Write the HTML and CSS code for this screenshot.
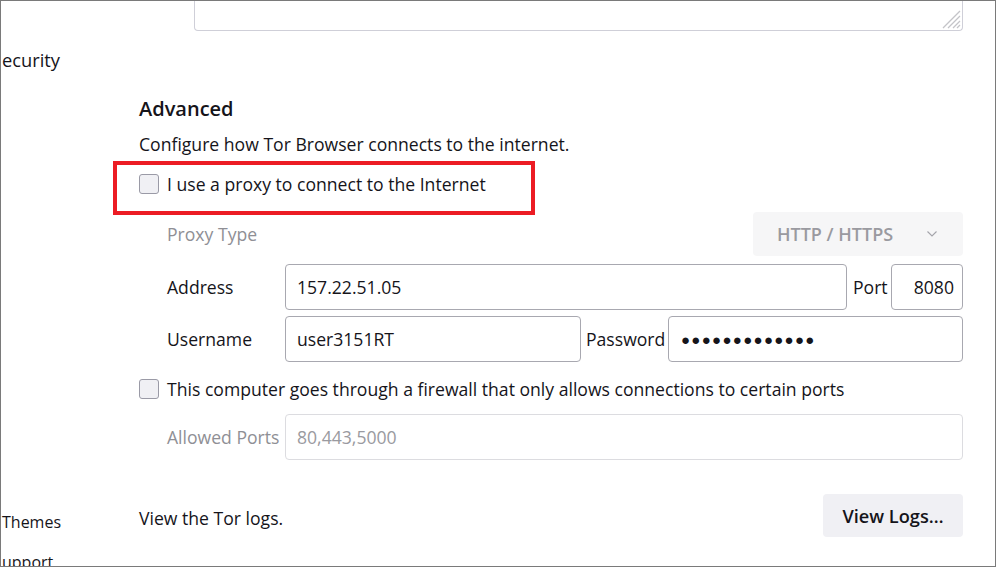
FILE: index.html
```html
<!DOCTYPE html>
<html lang="en">
<head>
<meta charset="utf-8">
<title>Tor Browser – Connection settings</title>
<link rel="stylesheet" href="styles.css">
</head>
<body>
<div class="window">
  <aside class="sidebar">
    <div class="nav-item nav-security">ecurity</div>
    <div class="nav-item nav-themes">Themes</div>
    <div class="nav-item nav-support">upport</div>
  </aside>
  <main class="content">
    <div class="textarea-tail">
      <svg class="grip" width="19" height="19" viewBox="0 0 19 19" aria-hidden="true">
        <path d="M18 1 L1 18 M18 6 L6 18 M18 11 L11 18 M18 15 L15 18" stroke="#c4c4c8" stroke-width="1.3" fill="none"/>
      </svg>
    </div>
    <section class="advanced">
      <h2 class="heading">Advanced</h2>
      <p class="desc">Configure how Tor Browser connects to the internet.</p>
      <div class="check-row proxy-check">
        <span class="checkbox"></span>
        <span class="check-label">I use a proxy to connect to the Internet</span>
      </div>
      <div class="form">
        <div class="row row-type">
          <span class="label disabled">Proxy Type</span>
          <div class="select">
            <span>HTTP / HTTPS</span>
            <svg class="chevron" width="12" height="8" viewBox="0 0 12 8" aria-hidden="true">
              <path d="M1.5 1.5 L6 6 L10.5 1.5" stroke="#a4a4aa" stroke-width="1.1" fill="none"/>
            </svg>
          </div>
        </div>
        <div class="row row-address">
          <span class="label">Address</span>
          <div class="field field-address">157.22.51.05</div>
          <span class="inline-label port-label">Port</span>
          <div class="field field-port">8080</div>
        </div>
        <div class="row row-user">
          <span class="label">Username</span>
          <div class="field field-user">user3151RT</div>
          <span class="inline-label pass-label">Password</span>
          <div class="field field-pass"><span class="dots">●●●●●●●●●●●●●</span></div>
        </div>
      </div>
      <div class="check-row firewall-check">
        <span class="checkbox"></span>
        <span class="check-label">This computer goes through a firewall that only allows connections to certain ports</span>
      </div>
      <div class="form">
        <div class="row row-ports">
          <span class="label disabled">Allowed Ports</span>
          <div class="field field-ports disabled-field">80,443,5000</div>
        </div>
      </div>
      <div class="logs-row">
        <span class="logs-text">View the Tor logs.</span>
        <button class="btn" type="button">View Logs…</button>
      </div>
    </section>
  </main>
  <div class="highlight"></div>
</div>
</body>
</html>
```
FILE: styles.css
```css
* { box-sizing: border-box; }

body {
  margin: 0;
  background: #ffffff;
  font-family: "Open Sans", "Noto Sans", sans-serif;
  color: #15141a;
}

.window {
  position: relative;
  width: 996px;
  height: 567px;
  border: 1px solid #7a7a7a;
  overflow: hidden;
  display: grid;
  grid-template-columns: 138px 824px;
  align-items: start;
}

/* sidebar */
.sidebar {
  display: flex;
  flex-direction: column;
  padding-left: 1px;
  padding-top: 46px;
}
.nav-item { white-space: nowrap; color: #15141a; }
.nav-security { font-size: 18.3px; line-height: 26px; }
.nav-themes { font-size: 16px; line-height: 22px; margin-top: 438px; }
.nav-support { font-size: 16px; line-height: 22px; margin-top: 18px; }

/* content */
.content {
  display: flex;
  flex-direction: column;
}

.textarea-tail {
  margin-left: 55px;
  height: 30px;
  border: 1px solid #cfcfd8;
  border-top: none;
  border-radius: 0 0 4px 4px;
  display: flex;
  justify-content: flex-end;
  align-items: flex-end;
  padding: 0 1px 1px 0;
}
.grip { display: block; }

.advanced {
  display: flex;
  flex-direction: column;
}

.heading {
  margin: 65px 0 0;
  font-size: 20px;
  font-weight: 600;
  line-height: 26px;
}

.desc {
  margin: 10px 0 0;
  font-size: 17.6px;
  line-height: 24px;
}

.check-row {
  display: flex;
  align-items: center;
  gap: 8px;
  font-size: 17.6px;
  line-height: 22px;
}
.proxy-check { margin-top: 17px; }
.firewall-check { margin-top: 16px; }

.checkbox {
  width: 20px;
  height: 20px;
  flex: none;
  border: 1px solid #9a9aa6;
  border-radius: 3px;
  background: #f0f0f4;
}

.form {
  display: flex;
  flex-direction: column;
  padding-left: 28px;
}

.row {
  display: flex;
  align-items: center;
  font-size: 17.6px;
}
.row-type { margin-top: 17px; }
.row-address { margin-top: 8px; }
.row-user { margin-top: 6px; }
.row-ports { margin-top: 14px; }

.label {
  width: 118px;
  flex: none;
  white-space: nowrap;
}
.label.disabled { color: #8f8f95; }

.inline-label {
  flex: none;
  white-space: nowrap;
}
.port-label { width: 44px; padding-left: 6px; }
.pass-label { width: 87px; padding-left: 5px; }

.select {
  margin-left: auto;
  width: 210px;
  height: 44px;
  background: #f6f6f7;
  border-radius: 4px;
  display: flex;
  align-items: center;
  justify-content: space-between;
  padding: 0 25px 0 24px;
  color: #9a9aa0;
  font-size: 18px;
  font-weight: 600;
}

.field {
  height: 46px;
  border: 1px solid #a8a8b0;
  border-radius: 4px;
  display: flex;
  align-items: center;
  padding: 0 11px;
  white-space: nowrap;
  font-size: 17.6px;
  overflow: hidden;
}
.field-address { width: 562px; }
.field-port { width: 72px; justify-content: flex-end; padding-right: 8px; }
.field-user { width: 296px; }
.field-pass { width: 295px; padding-left: 12px; }
.field-ports { width: 678px; }
.disabled-field { border-color: #dcdce0; color: #9a9aa0; }

.dots { font-size: 15px; letter-spacing: 1.3px; }

.logs-row {
  margin-top: 34px;
  display: flex;
  align-items: center;
  justify-content: space-between;
}
.logs-text { font-size: 17.6px; line-height: 24px; margin-top: 5px; }

.btn {
  width: 140px;
  height: 43px;
  border: none;
  border-radius: 4px;
  background: #f0f0f4;
  color: #15141a;
  font-family: inherit;
  font-size: 18.2px;
  font-weight: 600;
  padding: 0;
}

/* annotation overlay */
.highlight {
  position: absolute;
  left: 112px;
  top: 160px;
  width: 422px;
  height: 54px;
  border: 4px solid #ec1c24;
  pointer-events: none;
}
```
